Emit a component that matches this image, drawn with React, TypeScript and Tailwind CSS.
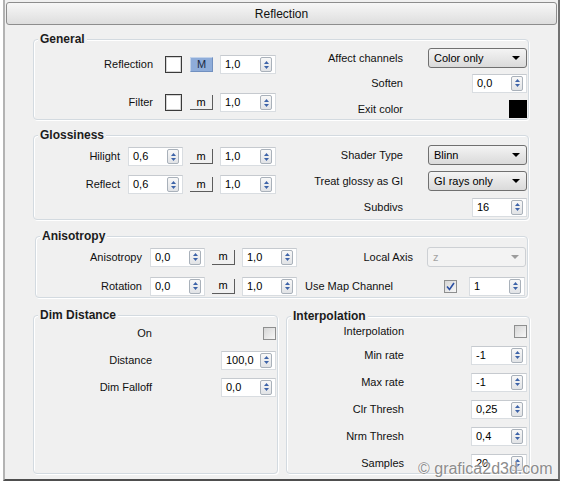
import React from "react";

function Arrows() {
  return (
    <div className="w-[12px] h-[15px] rounded-[2px] border border-[#a9b1ba] bg-gradient-to-b from-[#f8f8f8] to-[#e1e3e6] flex flex-col items-center justify-center gap-[2px] shrink-0">
      <svg width="5" height="3" viewBox="0 0 5 3">
        <path d="M0 3L2.5 0L5 3Z" fill="#3d63a8" />
      </svg>
      <svg width="5" height="3" viewBox="0 0 5 3">
        <path d="M0 0L5 0L2.5 3Z" fill="#3d63a8" />
      </svg>
    </div>
  );
}

function Spin({ v, cls }: { v: string; cls: string }) {
  return (
    <div
      className={`${cls} h-[19px] shrink-0 bg-white border border-[#d9dde1] border-t-[#c6cacf] flex items-center justify-between pl-[4px] pr-[3px]`}
    >
      <span className="text-[11px] leading-none text-black">{v}</span>
      <Arrows />
    </div>
  );
}

function Drop({ v, disabled }: { v: string; disabled?: boolean }) {
  return (
    <div
      className={
        disabled
          ? "w-[99px] h-[20px] shrink-0 rounded-[3px] border border-[#cdd0d4] bg-[#f3f3f3] flex items-center justify-between pl-[5px] pr-[6px]"
          : "w-[99px] h-[20px] shrink-0 rounded-[3px] border border-[#707070] bg-gradient-to-b from-[#f4f4f4] to-[#dadada] flex items-center justify-between pl-[5px] pr-[6px]"
      }
    >
      <span className={disabled ? "text-[11px] leading-none text-[#a3a3a3]" : "text-[11px] leading-none text-black"}>{v}</span>
      <svg width="8" height="4" viewBox="0 0 8 4">
        <path d="M0 0H8L4 4Z" fill={disabled ? "#9c9c9c" : "#000"} />
      </svg>
    </div>
  );
}

function Check({ checked }: { checked?: boolean }) {
  return (
    <div className="w-[13px] h-[13px] shrink-0 border border-[#8e8f8f] bg-gradient-to-br from-[#d6d6d6] to-[#f7f7f7] flex items-center justify-center">
      {checked && (
        <svg width="9" height="9" viewBox="0 0 9 9">
          <path d="M1 4.5L3.5 7.5L8 1" stroke="#2a4fa3" strokeWidth="1.6" fill="none" />
        </svg>
      )}
    </div>
  );
}

function MBtn({ active, label }: { active?: boolean; label: string }) {
  return active ? (
    <div className="w-[23px] h-[15px] shrink-0 bg-[#8eacd9] border border-[#7190c0] border-t-[#c3d3ea] border-l-[#c3d3ea] flex items-center justify-center text-[11px] leading-none text-[#1a2a44]">
      {label}
    </div>
  ) : (
    <div className="w-[23px] h-[15px] shrink-0 bg-[#f0f0f0] border-b border-r border-[#5c5c5c] flex items-center justify-center text-[11px] leading-none text-black">
      {label}
    </div>
  );
}

function Swatch({ black }: { black?: boolean }) {
  return black ? (
    <div className="w-[18px] h-[18px] shrink-0 bg-black" />
  ) : (
    <div className="w-[17px] h-[17px] shrink-0 bg-white border border-[#3a3a3a] shadow-[inset_0_0_0_1px_#d4d4d4]" />
  );
}

function Box({ title, className, children }: { title: string; className: string; children: React.ReactNode }) {
  return (
    <div
      className={`relative border border-[#d3dae0] rounded-[4px] shadow-[inset_1px_1px_0_#ffffff,1px_1px_0_#ffffff] ${className}`}
    >
      <span className="absolute -top-[8px] left-[4px] px-[2px] bg-[#f0f0f0] text-[12px] leading-[14px] font-bold text-[#1c1c1c]">
        {title}
      </span>
      {children}
    </div>
  );
}

function Label({ cls, children }: { cls: string; children: React.ReactNode }) {
  return <div className={`${cls} shrink-0 text-[11px] leading-none text-[#111]`}>{children}</div>;
}

export default function App() {
  return (
    <div className="relative w-[564px] h-[484px] bg-white font-['Liberation_Sans',Arial,sans-serif] overflow-hidden">
      <div className="ml-[3px] w-[557px] h-[481px] bg-[#f0f0f0] border-l-2 border-r-2 border-b-2 border-l-[#b3b3b3] border-r-[#727272] border-b-[#4e4e4e] flex flex-col">
        {/* Header */}
        <div className="mx-[1px] mt-[2px] h-[23px] shrink-0 rounded-[3px] border border-[#8d8d8d] bg-gradient-to-b from-[#f7f7f7] to-[#dedede] flex items-center justify-center text-[12px] text-[#111]">
          Reflection
        </div>

        {/* General */}
        <Box title="General" className="ml-[28px] mt-[14px] w-[496px] h-[81px] shrink-0 flex">
          <div className="w-[242px] flex flex-col pt-[15px] gap-[19px]">
            <div className="flex items-center h-[19px]">
              <Label cls="w-[119px] text-right">Reflection</Label>
              <div className="ml-[12px]"><Swatch /></div>
              <div className="ml-[8px]"><MBtn active label="M" /></div>
              <div className="ml-[7px]"><Spin v="1,0" cls="w-[56px]" /></div>
            </div>
            <div className="flex items-center h-[19px]">
              <Label cls="w-[119px] text-right">Filter</Label>
              <div className="ml-[12px]"><Swatch /></div>
              <div className="ml-[8px]"><MBtn label="m" /></div>
              <div className="ml-[7px]"><Spin v="1,0" cls="w-[56px]" /></div>
            </div>
          </div>
          <div className="w-[252px] flex flex-col pt-[8px]">
            <div className="flex items-center h-[20px]">
              <Label cls="w-[127px] text-right">Affect channels</Label>
              <div className="ml-[25px] w-[99px] flex justify-end"><Drop v="Color only" /></div>
            </div>
            <div className="flex items-center h-[20px] mt-[5px]">
              <Label cls="w-[127px] text-right">Soften</Label>
              <div className="ml-[25px] w-[99px] flex justify-end"><Spin v="0,0" cls="w-[55px]" /></div>
            </div>
            <div className="flex items-center h-[20px] mt-[6px]">
              <Label cls="w-[127px] text-right">Exit color</Label>
              <div className="ml-[25px] w-[99px] flex justify-end"><Swatch black /></div>
            </div>
          </div>
        </Box>

        {/* Glossiness */}
        <Box title="Glossiness" className="ml-[28px] mt-[15px] w-[496px] h-[85px] shrink-0 flex">
          <div className="w-[242px] flex flex-col pt-[11px] gap-[9px]">
            <div className="flex items-center h-[19px]">
              <Label cls="w-[86px] text-right">Hilight</Label>
              <div className="ml-[8px]"><Spin v="0,6" cls="w-[55px]" /></div>
              <div className="ml-[7px]"><MBtn label="m" /></div>
              <div className="ml-[7px]"><Spin v="1,0" cls="w-[56px]" /></div>
            </div>
            <div className="flex items-center h-[19px]">
              <Label cls="w-[86px] text-right">Reflect</Label>
              <div className="ml-[8px]"><Spin v="0,6" cls="w-[55px]" /></div>
              <div className="ml-[7px]"><MBtn label="m" /></div>
              <div className="ml-[7px]"><Spin v="1,0" cls="w-[56px]" /></div>
            </div>
          </div>
          <div className="w-[252px] flex flex-col pt-[9px]">
            <div className="flex items-center h-[20px]">
              <Label cls="w-[127px] text-right">Shader Type</Label>
              <div className="ml-[25px] w-[99px] flex justify-end"><Drop v="Blinn" /></div>
            </div>
            <div className="flex items-center h-[20px] mt-[6px]">
              <Label cls="w-[127px] text-right">Treat glossy as GI</Label>
              <div className="ml-[25px] w-[99px] flex justify-end"><Drop v="GI rays only" /></div>
            </div>
            <div className="flex items-center h-[20px] mt-[6px]">
              <Label cls="w-[127px] text-right">Subdivs</Label>
              <div className="ml-[25px] w-[99px] flex justify-end"><Spin v="16" cls="w-[55px]" /></div>
            </div>
          </div>
        </Box>

        {/* Anisotropy */}
        <Box title="Anisotropy" className="ml-[30px] mt-[16px] w-[493px] h-[62px] shrink-0 flex flex-col pt-[10px] gap-[9px]">
          <div className="flex items-center h-[20px]">
            <Label cls="w-[106px] text-right">Anisotropy</Label>
            <div className="ml-[8px]"><Spin v="0,0" cls="w-[55px]" /></div>
            <div className="ml-[7px]"><MBtn label="m" /></div>
            <div className="ml-[7px]"><Spin v="1,0" cls="w-[55px]" /></div>
            <Label cls="w-[116px] text-right">Local Axis</Label>
            <div className="ml-[14px]"><Drop v="z" disabled /></div>
          </div>
          <div className="flex items-center h-[20px]">
            <Label cls="w-[106px] text-right">Rotation</Label>
            <div className="ml-[8px]"><Spin v="0,0" cls="w-[55px]" /></div>
            <div className="ml-[7px]"><MBtn label="m" /></div>
            <div className="ml-[7px]"><Spin v="1,0" cls="w-[55px]" /></div>
            <Label cls="ml-[8px] w-[139px] text-left">Use Map Channel</Label>
            <Check checked />
            <div className="ml-[12px]"><Spin v="1" cls="w-[56px]" /></div>
          </div>
        </Box>

        {/* Bottom row */}
        <div className="ml-[28px] mt-[17px] flex items-start gap-[8px]">
          <Box title="Dim Distance" className="w-[245px] h-[159px] shrink-0 flex flex-col pt-[7px] gap-[7px]">
            <div className="flex items-center h-[20px]">
              <Label cls="w-[118px] text-right">On</Label>
              <div className="flex-1 flex justify-end pr-[1px]"><Check /></div>
            </div>
            <div className="flex items-center h-[20px]">
              <Label cls="w-[118px] text-right">Distance</Label>
              <div className="flex-1 flex justify-end pr-[1px]"><Spin v="100,0" cls="w-[55px]" /></div>
            </div>
            <div className="flex items-center h-[20px]">
              <Label cls="w-[118px] text-right">Dim Falloff</Label>
              <div className="flex-1 flex justify-end pr-[1px]"><Spin v="0,0" cls="w-[55px]" /></div>
            </div>
          </Box>
          <Box title="Interpolation" className="mt-[1px] w-[244px] h-[158px] shrink-0 flex flex-col pt-[6px]">
            <div className="flex items-center h-[16px]">
              <Label cls="w-[117px] text-right">Interpolation</Label>
              <div className="flex-1 flex justify-end pr-[2px]"><Check /></div>
            </div>
            <div className="flex items-center h-[20px] mt-[6px]">
              <Label cls="w-[117px] text-right">Min rate</Label>
              <div className="flex-1 flex justify-end pr-[2px]"><Spin v="-1" cls="w-[56px]" /></div>
            </div>
            <div className="flex items-center h-[20px] mt-[7px]">
              <Label cls="w-[117px] text-right">Max rate</Label>
              <div className="flex-1 flex justify-end pr-[2px]"><Spin v="-1" cls="w-[56px]" /></div>
            </div>
            <div className="flex items-center h-[20px] mt-[7px]">
              <Label cls="w-[117px] text-right">Clr Thresh</Label>
              <div className="flex-1 flex justify-end pr-[2px]"><Spin v="0,25" cls="w-[56px]" /></div>
            </div>
            <div className="flex items-center h-[20px] mt-[7px]">
              <Label cls="w-[117px] text-right">Nrm Thresh</Label>
              <div className="flex-1 flex justify-end pr-[2px]"><Spin v="0,4" cls="w-[56px]" /></div>
            </div>
            <div className="flex items-center h-[20px] mt-[7px]">
              <Label cls="w-[117px] text-right">Samples</Label>
              <div className="flex-1 flex justify-end pr-[2px]"><Spin v="20" cls="w-[56px]" /></div>
            </div>
          </Box>
        </div>
      </div>

      {/* Watermark */}
      <div className="absolute left-[418px] top-[460px] text-[16px] leading-[18px] text-[#8c8c8c] [text-shadow:0_0_2px_#ffffff,0_0_1px_#ffffff]">
        © grafica2d3d.com
      </div>
    </div>
  );
}
